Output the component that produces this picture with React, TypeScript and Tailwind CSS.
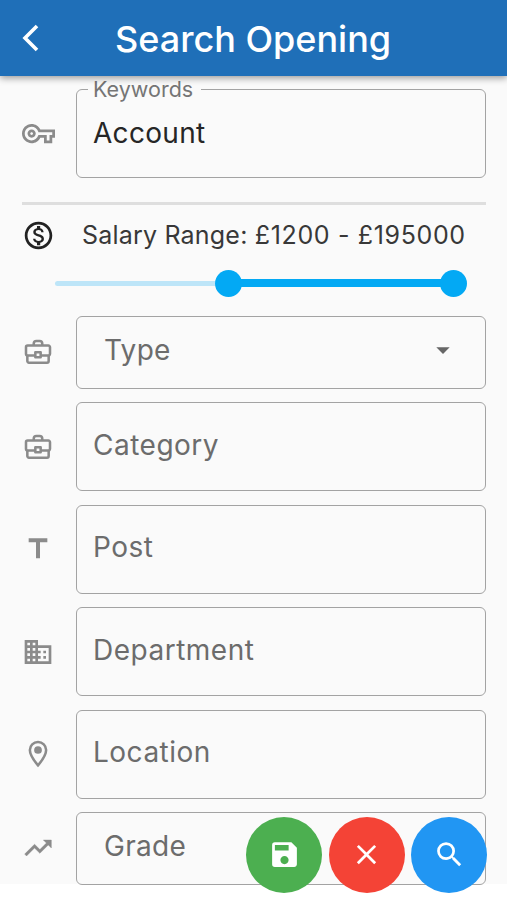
import React from 'react'
import {
    MdArrowDropDown,
    MdBusiness,
    MdClose,
    MdOutlineMonetizationOn,
    MdOutlineVpnKey,
    MdSave,
    MdSearch,
    MdTitle,
} from 'react-icons/md'

function BriefcaseIcon() {
    return (
        <svg viewBox="0 0 24 24" className="w-8 h-8" fill="none" stroke="currentColor" strokeWidth="1.9" strokeLinejoin="round">
            <path d="M8.8 7V5.8a2 2 0 0 1 2-2h2.4a2 2 0 0 1 2 2V7" />
            <path d="M10 14.6H4.2A1.2 1.2 0 0 1 3 13.4V8.4A1.2 1.2 0 0 1 4.2 7.2h15.6A1.2 1.2 0 0 1 21 8.4v5a1.2 1.2 0 0 1-1.2 1.2H14" />
            <path d="M4 14.6v4.2A1.2 1.2 0 0 0 5.2 20h13.6a1.2 1.2 0 0 0 1.2-1.2v-4.2" />
            <rect x="10" y="12.2" width="4" height="3.8" />
        </svg>
    )
}

function PlaceIcon() {
    return (
        <svg viewBox="0 0 24 24" className="w-8 h-8" fill="none" stroke="currentColor" strokeWidth="1.9">
            <path d="M12 3C8.6 3 5.9 5.7 5.9 9c0 2.9 2.2 6.9 6.1 11.5 3.9-4.6 6.1-8.6 6.1-11.5 0-3.3-2.7-6-6.1-6z" />
            <circle cx="12" cy="9" r="2.9" fill="currentColor" stroke="none" />
        </svg>
    )
}

function TrendIcon() {
    return (
        <svg viewBox="0 0 24 24" className="w-8 h-8" fill="currentColor" stroke="currentColor" strokeWidth="0.3">
            <path d="M16 6l2.29 2.29-4.88 4.88-4-4L2 16.59 3.41 18l6-6 4 4 6.3-6.29L22 12V6z" />
        </svg>
    )
}

type FieldProps = {
    icon: React.ReactNode
    label: string
    select?: boolean
    arrow?: boolean
}

function Field({ icon, label, select, arrow }: FieldProps) {
    return (
        <div className={`flex items-center ${select ? 'h-[72.5px]' : 'h-[89px]'}`}>
            <div className="w-8 shrink-0 flex justify-center text-[#8b8b8b]">{icon}</div>
            <div
                className={`ml-[22px] flex-1 h-full flex items-center justify-between border-[1.5px] border-[#a3a3a3] rounded-[6px] ${
                    select ? 'pl-[27px] pr-[26px] pb-[4px] tracking-[0.3px]' : 'pl-4 pr-4 pb-1 tracking-[0.5px]'
                }`}
            >
                <span className="text-[28px] leading-8 text-[#6c6c6c]">{label}</span>
                {arrow && <MdArrowDropDown className="w-8 h-8 text-[#666]" />}
            </div>
        </div>
    )
}

export default function App() {
    return (
        <div className="h-[900px] w-full bg-white overflow-hidden relative font-[Inter,sans-serif]">
            <div className="h-[884px] bg-[#fafafa]">
                <header className="relative h-[76px] bg-[#1f6fb8] shadow-[0_2px_7px_rgba(0,0,0,0.4)] flex items-center">
                    <svg viewBox="0 0 18 28" className="ml-[22px] w-[18px] h-[28px] text-white" fill="none" stroke="currentColor" strokeWidth="3.6">
                        <path d="M15 2L3 14l12 12" />
                    </svg>
                    <h1 className="ml-[75px] pt-px text-[36px] font-medium text-white whitespace-nowrap">Search Opening</h1>
                </header>

                <main className="pl-[22px] pr-[21.5px] flex flex-col">
                    <div className="mt-[3px] flex h-[99px]">
                        <div className="w-[33px] shrink-0 flex items-center pt-2.5 text-[#8b8b8b]">
                            <MdOutlineVpnKey className="w-[33px] h-[33px]" />
                        </div>
                        <fieldset className="ml-[21px] flex-1 min-w-0 border-[1.5px] border-[#a3a3a3] rounded-[6px] pl-[11px]">
                            <legend className="px-[5px] w-[113px] text-[21.5px] leading-[21px] text-[#757575]">Keywords</legend>
                            <div className="pl-[5px] pt-[17px] text-[28px] leading-8 text-[#262626] tracking-[0.3px]">Account</div>
                        </fieldset>
                    </div>

                    <div className="mt-6 h-[3px] bg-[#dedede]" />

                    <div className="mt-[14px] h-8 flex items-center">
                        <MdOutlineMonetizationOn className="w-[33px] h-[33px] text-[#222]" />
                        <p className="ml-[27px] pt-0.5 text-[25px] text-[#383838] whitespace-nowrap tracking-[0.2px]">
                            Salary Range: <span className="tracking-[0.65px]">£1200 - £195000</span>
                        </p>
                    </div>

                    <div className="mt-[18px] ml-[33px] mr-[19px] h-7 flex items-center">
                        <div className="w-[159.5px] h-[5px] bg-[#bde5f8] rounded-l-full" />
                        <div className="w-[27px] h-[27px] rounded-full bg-[#03a9f4]" />
                        <div className="flex-1 h-2 bg-[#03a9f4] -mx-1" />
                        <div className="w-[27px] h-[27px] rounded-full bg-[#03a9f4]" />
                    </div>

                    <div className="mt-[19px] flex flex-col gap-[13.5px]">
                        <Field icon={<BriefcaseIcon />} label="Type" select arrow />
                        <Field icon={<BriefcaseIcon />} label="Category" />
                        <Field icon={<MdTitle className="w-8 h-8" />} label="Post" />
                        <Field icon={<MdBusiness className="w-8 h-8" />} label="Department" />
                        <Field icon={<PlaceIcon />} label="Location" />
                        <Field icon={<TrendIcon />} label="Grade" select />
                    </div>
                </main>
            </div>

            <div className="absolute right-5 bottom-[7.5px] flex gap-[6.5px] text-white">
                <button className="w-[76px] h-[76px] rounded-full bg-[#4caf50] flex items-center justify-center">
                    <MdSave className="w-[33px] h-[33px]" />
                </button>
                <button className="w-[76px] h-[76px] rounded-full bg-[#f44336] flex items-center justify-center">
                    <MdClose className="w-[33px] h-[33px]" />
                </button>
                <button className="w-[76px] h-[76px] rounded-full bg-[#2196f3] flex items-center justify-center">
                    <MdSearch className="w-[33px] h-[33px]" />
                </button>
            </div>
        </div>
    )
}
